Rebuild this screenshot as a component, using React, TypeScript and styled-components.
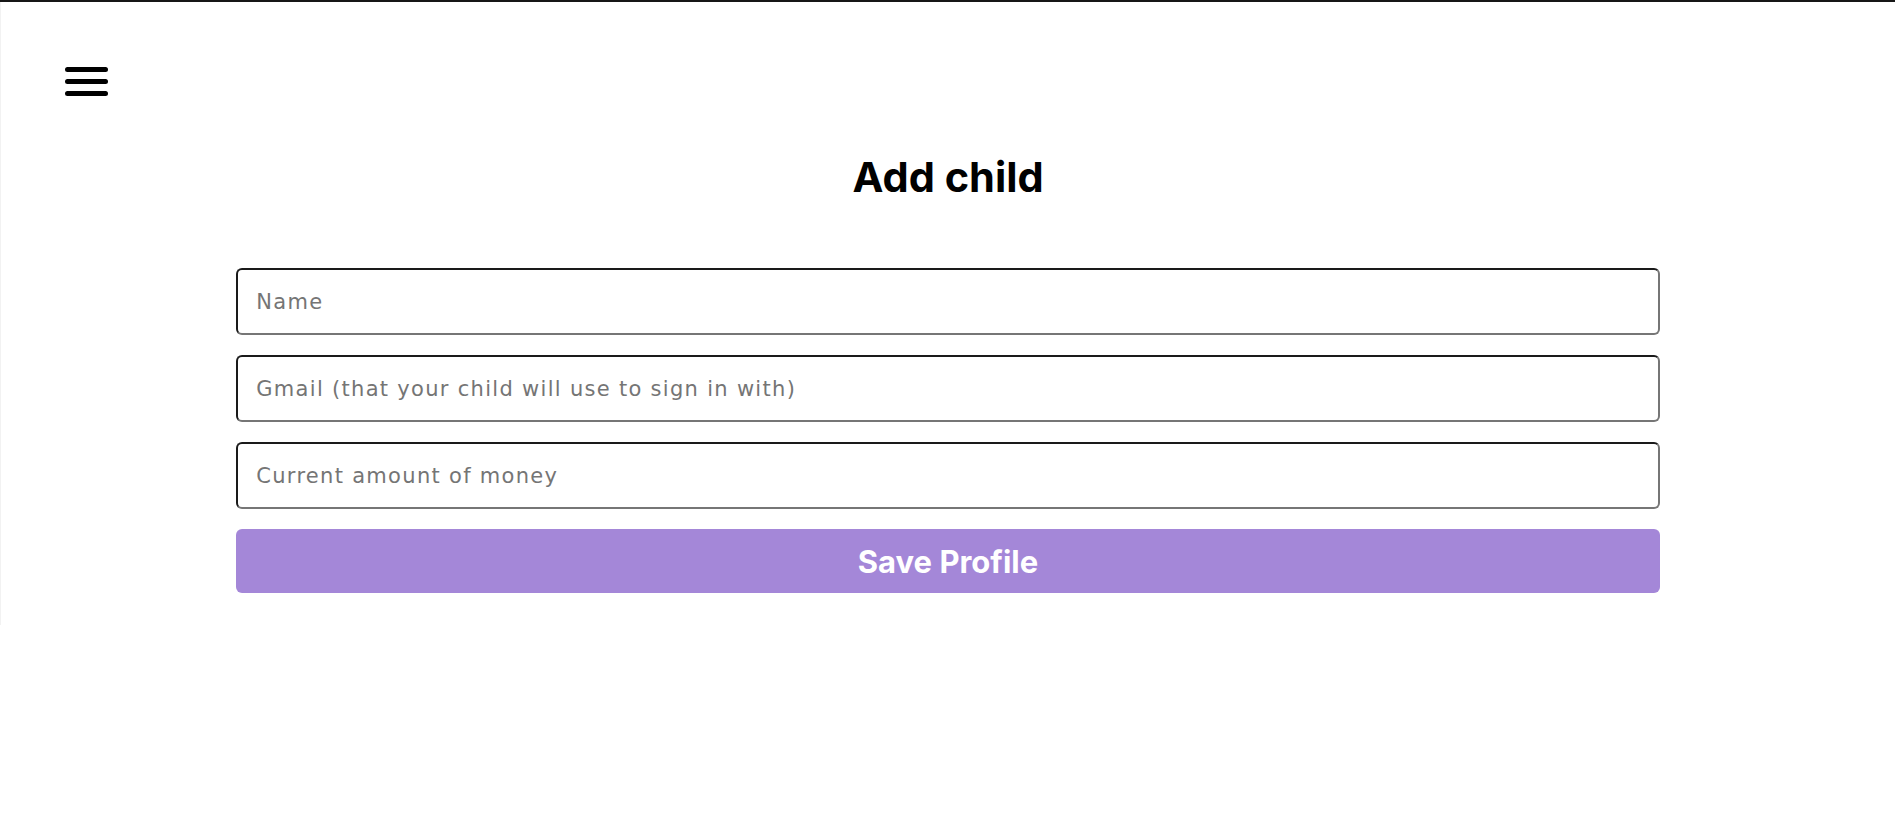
import React from 'react';
import styled, { createGlobalStyle } from 'styled-components';

const GlobalStyle = createGlobalStyle`
  html, body {
    margin: 0;
    padding: 0;
    background: #fff;
  }
  body {
    border-top: 2px solid #161616;
    font-family: Inter, "Liberation Sans", sans-serif;
  }
`;

const Page = styled.div`
  display: flex;
  flex-direction: column;
  min-height: 623px;
  border-left: 1px solid #f2f2f2;
  box-sizing: border-box;
`;

const Nav = styled.nav`
  display: flex;
  padding: 65px 0 0 64px;
`;

const MenuButton = styled.button`
  display: flex;
  padding: 0;
  border: none;
  background: none;
  cursor: pointer;
`;

const Title = styled.h1`
  margin: 57px 0 0;
  font-family: Inter, "Liberation Sans", sans-serif;
  font-size: 41.5px;
  line-height: 48px;
  font-weight: 700;
  color: #000;
  text-align: center;
`;

const Form = styled.form`
  display: flex;
  flex-direction: column;
  gap: 20px;
  width: calc(75% + 3px);
  margin: 67px auto 0;
`;

const Field = styled.input`
  height: 67px;
  box-sizing: border-box;
  padding: 0 18px;
  border: 2px solid;
  border-color: #1a1a1a #767676 #767676 #1a1a1a;
  border-radius: 6px;
  font-family: "DejaVu Sans", "Noto Sans", sans-serif;
  font-size: 21px;
  letter-spacing: 1.3px;
  color: #222;
  outline: none;

  &::placeholder {
    color: #757575;
  }
`;

const SaveButton = styled.button`
  height: 64px;
  border: none;
  border-radius: 6px;
  background: #a487d8;
  color: #fff;
  font-family: Inter, "Liberation Sans", sans-serif;
  font-size: 31px;
  font-weight: 700;
  cursor: pointer;
`;

const MenuIcon = () => (
  <svg width="43" height="29" viewBox="0 0 43 29" fill="none">
    <g stroke="#000" strokeWidth="5" strokeLinecap="round">
      <line x1="2.5" y1="2.5" x2="40.5" y2="2.5" />
      <line x1="2.5" y1="14.5" x2="40.5" y2="14.5" />
      <line x1="2.5" y1="26.5" x2="40.5" y2="26.5" />
    </g>
  </svg>
);

const App: React.FC = () => {
  return (
    <>
      <GlobalStyle />
      <Page>
        <Nav>
          <MenuButton aria-label="Menu">
            <MenuIcon />
          </MenuButton>
        </Nav>
        <Title>Add child</Title>
        <Form onSubmit={(e) => e.preventDefault()}>
          <Field type="text" placeholder="Name" />
          <Field type="email" placeholder="Gmail (that your child will use to sign in with)" />
          <Field type="number" placeholder="Current amount of money" />
          <SaveButton type="submit">Save Profile</SaveButton>
        </Form>
      </Page>
    </>
  );
};

export default App;
